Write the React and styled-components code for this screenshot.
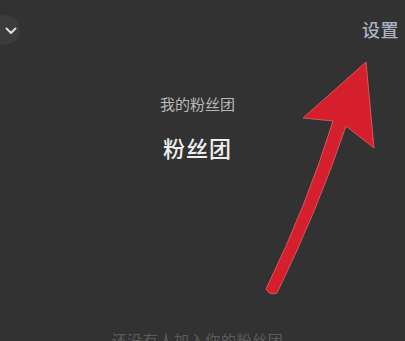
import React from "react";
import styled, { createGlobalStyle } from "styled-components";

const Global = createGlobalStyle`
  html, body { margin: 0; padding: 0; background: #323232; }
  body { font-family: "Noto Sans CJK SC", "Noto Sans", sans-serif; }
`;

const Page = styled.div`
  position: relative;
  width: 405px;
  height: 341px;
  overflow: hidden;
  background: #323232;
  display: flex;
  flex-direction: column;
`;

const Header = styled.div`
  flex-shrink: 0;
  height: 58px;
  display: flex;
  align-items: center;
  justify-content: space-between;
  padding-right: 6px;
`;

const BackButton = styled.div`
  width: 30px;
  height: 30px;
  margin-left: -10px;
  margin-top: 2px;
  border-radius: 50%;
  background: #3b3b3b;
  display: flex;
  align-items: center;
  justify-content: flex-end;
  padding-right: 3px;
  padding-top: 2px;
  box-sizing: border-box;
`;

const SettingLink = styled.span`
  font-size: 18px;
  line-height: 24px;
  color: #aab3c3;
  font-weight: 500;
  letter-spacing: 0.5px;
`;

const Content = styled.div`
  flex-shrink: 0;
  display: flex;
  flex-direction: column;
  align-items: center;
  padding-right: 10px;
`;

const Subtitle = styled.div`
  margin-top: 36px;
  font-size: 15px;
  line-height: 20px;
  color: #b8b8b8;
`;

const Title = styled.div`
  margin-top: 19px;
  font-size: 22px;
  line-height: 28px;
  color: #eeeeee;
  font-weight: 500;
  letter-spacing: 1px;
`;

const Empty = styled.div`
  margin-top: 169px;
  font-size: 15px;
  line-height: 20px;
  color: #5c5c5c;
  letter-spacing: 0.6px;
`;

const ArrowLayer = styled.svg`
  position: absolute;
  left: 0;
  top: 0;
  pointer-events: none;
`;

export default function App() {
  return (
    <>
      <Global />
      <Page>
        <Header>
          <BackButton>
            <svg width="12" height="8" viewBox="0 0 12 8">
              <path d="M1.5 1.5 L6 6 L10.5 1.5" fill="none" stroke="#dcdcdc" strokeWidth="2" strokeLinecap="round" strokeLinejoin="round" />
            </svg>
          </BackButton>
          <SettingLink>设置</SettingLink>
        </Header>
        <Content>
          <Subtitle>我的粉丝团</Subtitle>
          <Title>粉丝团</Title>
          <Empty>还没有人加入你的粉丝团</Empty>
        </Content>
        <ArrowLayer width="405" height="341" viewBox="0 0 405 341">
          <path
            d="M366 62 L303 118 L333 121 Q307 205 266 289 Q270 296 277 293 Q318 209 346 126 L374 148 Z"
            fill="#d61f2c"
            stroke="#e4636b"
            strokeWidth="0.8"
            strokeLinejoin="round"
          />
        </ArrowLayer>
      </Page>
    </>
  );
}
